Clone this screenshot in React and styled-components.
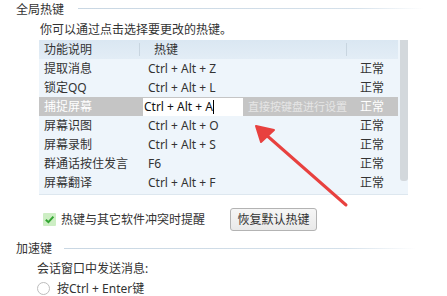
import React from "react";
import styled, { createGlobalStyle } from "styled-components";

const Global = createGlobalStyle`
  html, body { margin: 0; padding: 0; background: #fff; }
  body { font-family: "Noto Sans", "Noto Sans CJK SC", sans-serif; font-size: 12px; color: #333; }
  #root { width: 447px; height: 296px; overflow: hidden; }
`;

const Page = styled.div`
  position: relative;
  width: 447px;
  height: 296px;
  padding-left: 16px;
  box-sizing: border-box;
`;

const SectionHead = styled.div`
  display: flex;
  align-items: center;
  height: 20px;
  margin-top: ${(p) => p.$mt || 0}px;
  width: ${(p) => p.$w}px;
`;

const SectionTitle = styled.span`
  line-height: 20px;
  white-space: nowrap;
  margin-right: ${(p) => p.$gap}px;
`;

const Rule = styled.div`
  flex: 1;
  height: 1px;
  margin-top: ${(p) => p.$dy || 0}px;
  background: linear-gradient(to right, #c9d7e3 0%, #d4e0ea 80%, rgba(220, 230, 238, 0) 100%);
`;

const Desc = styled.div`
  line-height: 20px;
  margin-left: ${(p) => p.$ml}px;
`;

const Table = styled.div`
  display: flex;
  margin-left: 23px;
  width: 369px;
  height: 155px;
  background: #eef5fb;
  border-bottom: 1px solid #dde7ef;
  box-sizing: border-box;
`;

const List = styled.div`
  flex: 1;
  display: flex;
  flex-direction: column;
`;

const Row = styled.div`
  display: grid;
  grid-template-columns: 100px 207px 1fr;
  height: 19px;
  line-height: 19px;
  background: ${(p) => (p.$selected ? "#c5c5c5" : "transparent")};
  color: ${(p) => (p.$selected ? "#fff" : "#333")};
`;

const HeadRow = styled(Row)`
  background: linear-gradient(to bottom, #dae7f2, #e3edf6);
  color: #333;
`;

const Cell = styled.div`
  position: relative;
  padding-left: ${(p) => p.$pl}px;
  white-space: nowrap;
  overflow: ${(p) => (p.$visible ? "visible" : "hidden")};
  display: flex;
  align-items: center;
`;

const HeadSep = styled.span`
  position: absolute;
  left: 0;
  top: 3px;
  bottom: 3px;
  width: 1px;
  background: #c8d5e0;
`;

const KeyInput = styled.div`
  flex-shrink: 0;
  width: 100px;
  height: 18px;
  line-height: 18px;
  background: #fff;
  color: #111;
  padding-left: 1px;
  box-sizing: border-box;
  margin-left: 4px;
  display: flex;
  align-items: center;
`;

const Caret = styled.span`
  display: inline-block;
  width: 1px;
  height: 14px;
  background: #000;
`;

const Hint = styled.span`
  flex-shrink: 0;
  margin-left: 5px;
  font-size: 11px;
  color: #e6e6e6;
`;

const ScrollTrack = styled.div`
  width: 8px;
  margin-left: 2px;
  display: flex;
  flex-direction: column;
`;

const Thumb = styled.div`
  height: 141px;
  background: #d3d8dc;
  border-radius: 0 0 3px 3px;
`;

const OptionRow = styled.div`
  display: flex;
  align-items: center;
  margin-top: 13px;
  margin-left: 27px;
  height: 22px;
`;

const CheckLabel = styled.label`
  display: flex;
  align-items: center;
  gap: 5px;
  width: 187px;
`;

const Button = styled.button`
  height: 23px;
  width: 87px;
  padding: 0;
  font-family: inherit;
  font-size: 12px;
  color: #333;
  background: linear-gradient(to bottom, #f6f6f6, #e9e9e9);
  border: 1px solid #b3b3b3;
  border-radius: 3px;
`;

const RadioRow = styled.div`
  display: flex;
  align-items: center;
  gap: 7px;
  margin-left: 21px;
  height: 18px;
`;

const Radio = styled.span`
  width: 11px;
  height: 11px;
  border-radius: 50%;
  border: 1px solid #bdbdbd;
  background: #fff;
`;

const ArrowSvg = styled.svg`
  position: absolute;
  left: 0;
  top: 0;
  pointer-events: none;
`;

const rows = [
  ["提取消息", "Ctrl + Alt + Z"],
  ["锁定QQ", "Ctrl + Alt + L"],
  ["捕捉屏幕", "Ctrl + Alt + A", true],
  ["屏幕识图", "Ctrl + Alt + O"],
  ["屏幕录制", "Ctrl + Alt + S"],
  ["群通话按住发言", "F6"],
  ["屏幕翻译", "Ctrl + Alt + F"],
];

export default function App() {
  return (
    <Page>
      <Global />
      <SectionHead $w={408}>
        <SectionTitle $gap={14}>全局热键</SectionTitle>
        <Rule $dy={-3} />
      </SectionHead>
      <Desc $ml={24}>你可以通过点击选择要更改的热键。</Desc>
      <Table>
        <List>
          <HeadRow>
            <Cell $pl={5}>功能说明</Cell>
            <Cell $pl={15}>
              <HeadSep />
              热键
            </Cell>
            <Cell $pl={14}>
              <HeadSep />
            </Cell>
          </HeadRow>
          {rows.map(([name, key, sel]) => (
            <Row key={name} $selected={sel}>
              <Cell $pl={5}>{name}</Cell>
              {sel ? (
                <Cell $pl={0} $visible>
                  <KeyInput>
                    {key}
                    <Caret />
                  </KeyInput>
                  <Hint>直接按键盘进行设置</Hint>
                </Cell>
              ) : (
                <Cell $pl={9}>{key}</Cell>
              )}
              <Cell $pl={14}>正常</Cell>
            </Row>
          ))}
        </List>
        <ScrollTrack>
          <Thumb />
        </ScrollTrack>
      </Table>
      <OptionRow>
        <CheckLabel>
          <svg width="13" height="13" viewBox="0 0 13 13">
            <rect x="0" y="0" width="13" height="13" rx="1" fill="#cdeec4" />
            <path d="M2.8 6.8 L5.4 9.2 L10.4 3.6" fill="none" stroke="#33a532" strokeWidth="2" />
          </svg>
          热键与其它软件冲突时提醒
        </CheckLabel>
        <Button>恢复默认热键</Button>
      </OptionRow>
      <SectionHead $w={400} $mt={9}>
        <SectionTitle $gap={12}>加速键</SectionTitle>
        <Rule $dy={-2} />
      </SectionHead>
      <Desc $ml={21}>会话窗口中发送消息:</Desc>
      <RadioRow>
        <Radio />
        按Ctrl + Enter键
      </RadioRow>
      <ArrowSvg width="447" height="296" viewBox="0 0 447 296">
        <line x1="346" y1="205" x2="264" y2="133" stroke="#e8413f" strokeWidth="3" strokeLinecap="round" />
        <path d="M256 126 L274 130 L261 142 Z" fill="#e8413f" stroke="#e8413f" strokeWidth="2" strokeLinejoin="round" />
      </ArrowSvg>
    </Page>
  );
}
